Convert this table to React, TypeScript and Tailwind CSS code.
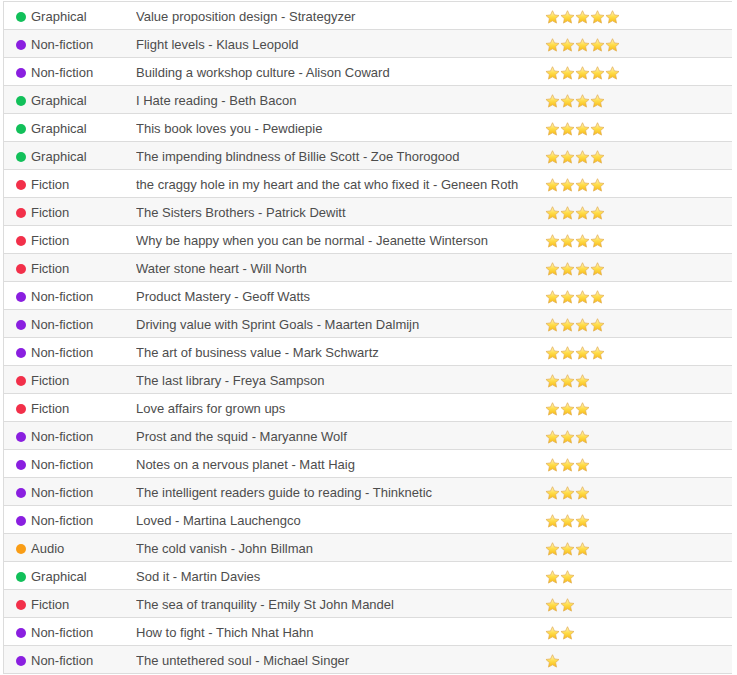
import React from 'react';

type Genre = 'Graphical' | 'Non-fiction' | 'Fiction' | 'Audio';

const dotColor: Record<Genre, string> = {
  Graphical: 'bg-[#12c05a]',
  'Non-fiction': 'bg-[#8a1fe0]',
  Fiction: 'bg-[#f2304a]',
  Audio: 'bg-[#f99d16]',
};

const books: [Genre, string, number][] = [
  ['Graphical', 'Value proposition design - Strategyzer', 5],
  ['Non-fiction', 'Flight levels - Klaus Leopold', 5],
  ['Non-fiction', 'Building a workshop culture - Alison Coward', 5],
  ['Graphical', 'I Hate reading - Beth Bacon', 4],
  ['Graphical', 'This book loves you - Pewdiepie', 4],
  ['Graphical', 'The impending blindness of Billie Scott - Zoe Thorogood', 4],
  ['Fiction', 'the craggy hole in my heart and the cat who fixed it - Geneen Roth', 4],
  ['Fiction', 'The Sisters Brothers - Patrick Dewitt', 4],
  ['Fiction', 'Why be happy when you can be normal - Jeanette Winterson', 4],
  ['Fiction', 'Water stone heart - Will North', 4],
  ['Non-fiction', 'Product Mastery - Geoff Watts', 4],
  ['Non-fiction', 'Driving value with Sprint Goals - Maarten Dalmijn', 4],
  ['Non-fiction', 'The art of business value - Mark Schwartz', 4],
  ['Fiction', 'The last library - Freya Sampson', 3],
  ['Fiction', 'Love affairs for grown ups', 3],
  ['Non-fiction', 'Prost and the squid - Maryanne Wolf', 3],
  ['Non-fiction', 'Notes on a nervous planet - Matt Haig', 3],
  ['Non-fiction', 'The intelligent readers guide to reading - Thinknetic', 3],
  ['Non-fiction', 'Loved - Martina Lauchengco', 3],
  ['Audio', 'The cold vanish - John Billman', 3],
  ['Graphical', 'Sod it - Martin Davies', 2],
  ['Fiction', 'The sea of tranquility - Emily St John Mandel', 2],
  ['Non-fiction', 'How to fight - Thich Nhat Hahn', 2],
  ['Non-fiction', 'The untethered soul - Michael Singer', 1],
];

const Star = () => (
  <svg width="15" height="14" viewBox="0 0 24 23" className="shrink-0">
    <defs>
      <linearGradient id="sg" x1="0" y1="0" x2="0" y2="1">
        <stop offset="0" stopColor="#fff7c4" />
        <stop offset="0.5" stopColor="#ffdc48" />
        <stop offset="1" stopColor="#f7b916" />
      </linearGradient>
    </defs>
    <path
      d="M12 1.2l3.2 6.9 7.5.9-5.6 5.1 1.5 7.4L12 17.8l-6.6 3.7 1.5-7.4L1.3 9l7.5-.9z"
      fill="url(#sg)"
      stroke="#e4ad52"
      strokeWidth="1.2"
      strokeLinejoin="round"
    />
  </svg>
);

const App = () => {
  return (
    <div className="w-[737px] h-[675px] bg-white pt-px font-['Liberation_Sans','Helvetica',sans-serif] text-[13px] text-[#4d4d4d]">
      <div className="ml-[3px] w-[729px] border-l border-t border-[#dcdcdc]">
        {books.map(([genre, title, stars], i) => (
          <div
            key={title}
            className={`flex items-center h-[28px] pt-[2px] border-b border-[#dcdcdc] ${
              i % 2 === 1 ? 'bg-[#f7f7f7]' : 'bg-white'
            }`}
          >
            <div className="flex items-center w-[132px] pl-[12px] gap-[5px]">
              <span className={`w-[10px] h-[10px] rounded-full ${dotColor[genre]}`} />
              <span>{genre}</span>
            </div>
            <div className="w-[409px] truncate">{title}</div>
            <div className="flex">
              {Array.from({ length: stars }).map((_, k) => (
                <Star key={k} />
              ))}
            </div>
          </div>
        ))}
      </div>
    </div>
  );
};

export default App;
